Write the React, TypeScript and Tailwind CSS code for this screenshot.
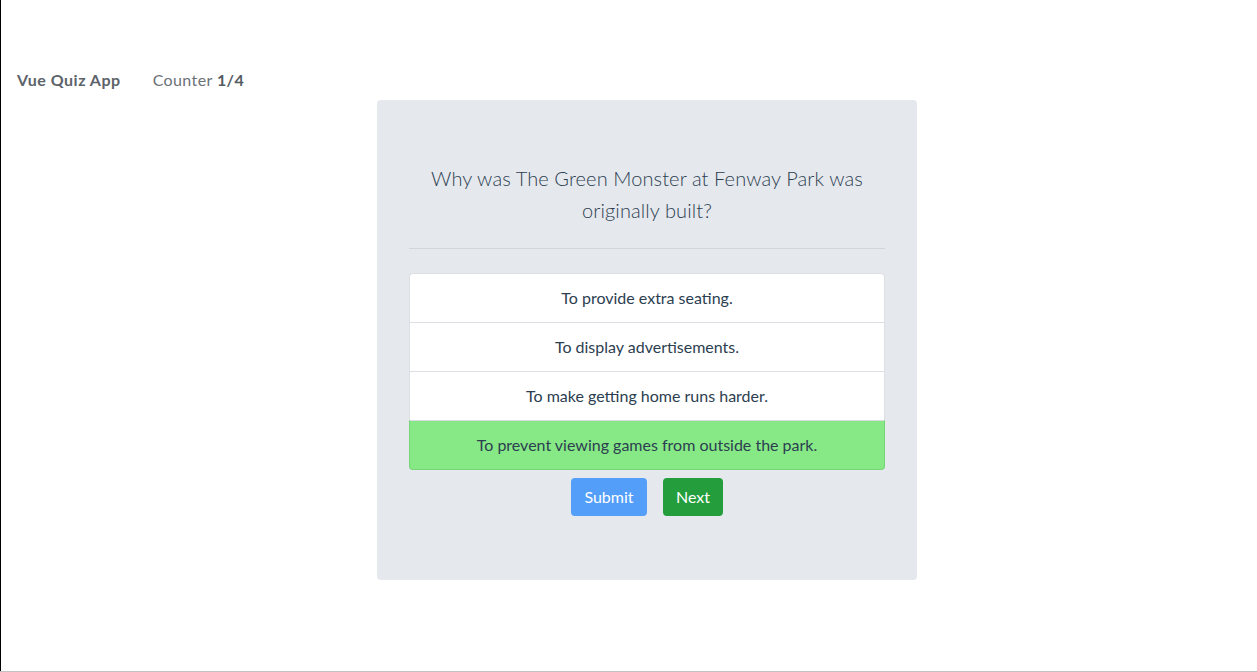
import React from "react";

const answers = [
  "To provide extra seating.",
  "To display advertisements.",
  "To make getting home runs harder.",
  "To prevent viewing games from outside the park.",
];

export default function App() {
  return (
    <div className="w-[1257px] h-[672px] bg-white overflow-hidden flex flex-col" style={{ fontFamily: "Lato, 'Noto Sans', sans-serif" }}>
      <div className="flex-1 border-l border-black flex flex-col">
        <nav className="mt-[68px] h-[24px] flex items-center pl-[16px] text-[16px]">
          <span className="font-bold text-[#5d636a] tracking-[0.5px]">Vue Quiz App</span>
          <span className="ml-[32px] text-[#6b7177] tracking-[0.4px]">
            Counter <span className="font-bold text-[#555b62]">1/4</span>
          </span>
        </nav>
        <div className="mt-[8px] ml-[376px] w-[540px] bg-[#e5e8ed] rounded-[4px] px-[32px] pt-[62px] pb-[64px] text-[#2c3e50]">
          <h2 className="text-[20px] leading-[32px] font-light text-center px-[14px] text-[#2c3e50] tracking-[0.1px]">
            Why was The Green Monster at Fenway Park was originally built?
          </h2>
          <hr className="mt-[22px] mb-[24px] border-0 border-t border-[#d2d5da]" />
          <div className="flex flex-col">
            <div className="h-[49px] flex items-center justify-center text-[16px] bg-white border border-b-0 border-[#dcdfe3] rounded-t-[4px] px-[20px]">
              {answers[0]}
            </div>
            <div className="h-[49px] flex items-center justify-center text-[16px] bg-white border border-b-0 border-[#dcdfe3] px-[20px]">
              {answers[1]}
            </div>
            <div className="h-[49px] flex items-center justify-center text-[16px] bg-white border border-b-0 border-[#dcdfe3] px-[20px]">
              {answers[2]}
            </div>
            <div className="h-[50px] flex items-center justify-center text-[16px] bg-[#86e986] border border-t-[#d8dcdf] border-[#76d477] rounded-b-[4px] px-[20px]">
              {answers[3]}
            </div>
          </div>
          <div className="mt-[8px] flex justify-center gap-[16px]">
            <button className="h-[38px] w-[76px] rounded-[4px] bg-[#529ef9] text-white text-[16px]">Submit</button>
            <button className="h-[38px] w-[60px] rounded-[4px] bg-[#249e3d] text-white text-[16px]">Next</button>
          </div>
        </div>
      </div>
      <div className="h-px bg-[#c2c2c2]" />
    </div>
  );
}
